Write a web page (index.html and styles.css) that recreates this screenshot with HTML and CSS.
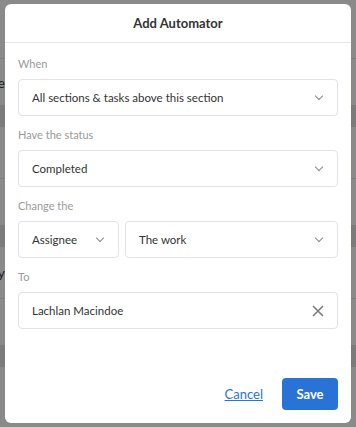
FILE: index.html
```html
<!DOCTYPE html>
<html lang="en">
<head>
  <meta charset="UTF-8" />
  <meta name="viewport" content="width=device-width, initial-scale=1" />
  <title>Add Automator</title>
  <link rel="stylesheet" href="styles.css">
</head>
<body>
  <!-- Page behind the overlay -->
  <div class="backdrop">
    <div class="bg-top"></div>
    <div class="bg-row">
      <div class="bg-text first">The</div>
      <div class="bg-band"></div>
    </div>
    <div class="bg-row">
      <div class="bg-text"></div>
      <div class="bg-band"></div>
      <div class="bg-text after">Any</div>
    </div>
    <div class="bg-row">
      <div class="bg-text"></div>
      <div class="bg-band"></div>
    </div>
  </div>

  <!-- Modal -->
  <div class="modal" role="dialog" aria-labelledby="modalTitle">
    <div class="modal-header">
      <h2 id="modalTitle">Add Automator</h2>
    </div>

    <div class="modal-body">
      <label class="field-label">When</label>
      <div class="select">
        <span>All sections &amp; tasks above this section</span>
        <i class="chevron"></i>
      </div>

      <label class="field-label">Have the status</label>
      <div class="select">
        <span>Completed</span>
        <i class="chevron"></i>
      </div>

      <label class="field-label">Change the</label>
      <div class="select-row">
        <div class="select small">
          <span>Assignee</span>
          <i class="chevron"></i>
        </div>
        <div class="select grow">
          <span>The work</span>
          <i class="chevron"></i>
        </div>
      </div>

      <label class="field-label">To</label>
      <div class="select">
        <span>Lachlan Macindoe</span>
        <svg class="clear" width="12" height="12" viewBox="0 0 12 12" aria-label="Clear">
          <path d="M1 1 L11 11 M11 1 L1 11" stroke="#7a7a7a" stroke-width="1.5" fill="none" />
        </svg>
      </div>
    </div>

    <div class="modal-footer">
      <a href="#" class="cancel">Cancel</a>
      <button class="save">Save</button>
    </div>
  </div>
</body>
</html>
```

FILE: styles.css
```css
* {
  margin: 0;
  padding: 0;
  box-sizing: border-box;
  font-family: 'Lato', 'Open Sans', sans-serif;
}

body {
  background: #8a8a8a;
  width: 356px;
  height: 427px;
  overflow: hidden;
  position: relative;
}

/* Background page (dimmed) */
.backdrop {
  display: flex;
  flex-direction: column;
}

.bg-top {
  height: 58px;
}

.bg-row {
  height: 120px;
  border-top: 1px solid #7c7c7c;
  display: flex;
  flex-direction: column;
}

/* only the tail of the text peeks out from under the modal */
.bg-text {
  width: 5px;
  height: 46px;
  display: flex;
  justify-content: flex-end;
  white-space: nowrap;
  font-size: 14px;
  color: #1e1e1e;
}

.bg-text.first {
  padding-top: 15px;
}

.bg-text.after {
  height: auto;
  padding-top: 17px;
}

.bg-band {
  height: 22px;
  background: #7b7b7b;
}

/* Modal */
.modal {
  position: absolute;
  top: 4px;
  left: 5px;
  width: 346px;
  height: 419px;
  background: #fff;
  border-radius: 6px;
  display: flex;
  flex-direction: column;
}

.modal-header {
  height: 39px;
  border-bottom: 1px solid #e4e4e8;
  display: flex;
  justify-content: center;
  align-items: center;
}

.modal-header h2 {
  font-size: 13px;
  font-weight: 700;
  color: #333;
  padding-bottom: 1px;
}

.modal-body {
  padding: 13px 13px 0;
  display: flex;
  flex-direction: column;
}

.field-label {
  font-size: 11px;
  line-height: 16px;
  color: #9a9a9a;
  margin-bottom: 7px;
}

.select {
  height: 37px;
  border: 1px solid #e2e2ea;
  border-radius: 4px;
  display: flex;
  align-items: center;
  justify-content: space-between;
  padding: 0 13px;
  font-size: 11.5px;
  color: #333;
  margin-bottom: 11px;
}

.select-row {
  display: flex;
  gap: 6px;
}

.select.small {
  width: 101px;
}

.select.grow {
  flex: 1;
}

.chevron {
  width: 6px;
  height: 6px;
  border: solid #8a8a8a;
  border-width: 0 1.3px 1.3px 0;
  transform: rotate(45deg);
  margin-top: -3px;
  margin-right: 2px;
}

.modal-footer {
  margin-top: auto;
  padding: 0 13px 13px;
  display: flex;
  justify-content: flex-end;
  align-items: center;
  gap: 19px;
}

.cancel {
  color: #2a73d6;
  font-size: 13px;
  text-decoration: underline;
}

.save {
  width: 56px;
  height: 32px;
  border: none;
  border-radius: 4px;
  background: #2a73d6;
  color: #fff;
  font-size: 13px;
  font-weight: 700;
}
```
